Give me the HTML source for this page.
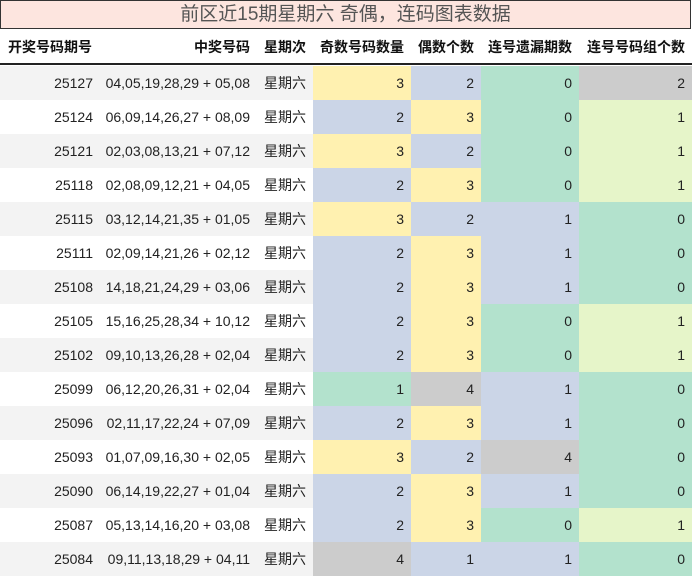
<!DOCTYPE html>
<html><head><meta charset="utf-8"><style>
*{margin:0;padding:0;box-sizing:border-box}
body{width:692px;height:576px;background:#fff;font-family:"Liberation Sans","Noto Sans CJK SC",sans-serif;position:relative;overflow:hidden;color:#222}
.t{position:absolute;left:0;top:0;width:691px;height:29px;background:#fde5df;border:1px solid #333;text-align:center;font-size:19px;line-height:27px;color:#555}
.h{position:absolute;top:29px;height:36px;line-height:36px;font-size:14px;font-weight:bold;color:#111;border-bottom:2px solid #222}
.c{position:absolute;height:34px;line-height:34px;font-size:14px;text-align:right;padding-right:7px}
</style></head><body>
<div class="t">前区近15期星期六 奇偶，连码图表数据</div>
<div id="w"></div>
<script>
var cols=[[0,100],[100,257],[257,313],[313,411],[411,481],[481,579],[579,692]];
var hd=["开奖号码期号","中奖号码","星期次","奇数号码数量","偶数个数","连号遗漏期数","连号号码组个数"];
var C={y:"#fff1b0",b:"#cbd5e7",g:"#b3e2cd",x:"#cccccc",l:"#e6f5c9"};
var rows=[
["25127","04,05,19,28,29 + 05,08","3y","2b","0g","2x"],
["25124","06,09,14,26,27 + 08,09","2b","3y","0g","1l"],
["25121","02,03,08,13,21 + 07,12","3y","2b","0g","1l"],
["25118","02,08,09,12,21 + 04,05","2b","3y","0g","1l"],
["25115","03,12,14,21,35 + 01,05","3y","2b","1b","0g"],
["25111","02,09,14,21,26 + 02,12","2b","3y","1b","0g"],
["25108","14,18,21,24,29 + 03,06","2b","3y","1b","0g"],
["25105","15,16,25,28,34 + 10,12","2b","3y","0g","1l"],
["25102","09,10,13,26,28 + 02,04","2b","3y","0g","1l"],
["25099","06,12,20,26,31 + 02,04","1g","4x","1b","0g"],
["25096","02,11,17,22,24 + 07,09","2b","3y","1b","0g"],
["25093","01,07,09,16,30 + 02,05","3y","2b","4x","0g"],
["25090","06,14,19,22,27 + 01,04","2b","3y","1b","0g"],
["25087","05,13,14,16,20 + 03,08","2b","3y","0g","1l"],
["25084","09,11,13,18,29 + 04,11","4x","1b","1b","0g"]];
var h="";
h+='<div class="h" style="left:0;width:692px"></div>';
hd.forEach(function(t,i){var s=i==0?'text-align:left;padding-left:8px':'text-align:right;padding-right:7px';
h+='<div class="h" style="left:'+cols[i][0]+'px;width:'+(cols[i][1]-cols[i][0])+'px;border:0;'+s+'">'+t+'</div>';});
rows.forEach(function(r,k){var top=66+k*34;var bg=k%2==0?"#f3f3f3":"#fff";
var v=[r[0],r[1],"星期六",r[2],r[3],r[4],r[5]];
v.forEach(function(t,i){var b=bg,txt=t;if(i>=3){b=C[t[1]];txt=t[0];}
var st=i==2?'text-align:center;padding:0':'';
h+='<div class="c" style="left:'+cols[i][0]+'px;top:'+top+'px;width:'+(cols[i][1]-cols[i][0])+'px;background:'+b+';'+st+'">'+txt+'</div>';});});
document.getElementById("w").innerHTML=h;
</script>
</body></html>
